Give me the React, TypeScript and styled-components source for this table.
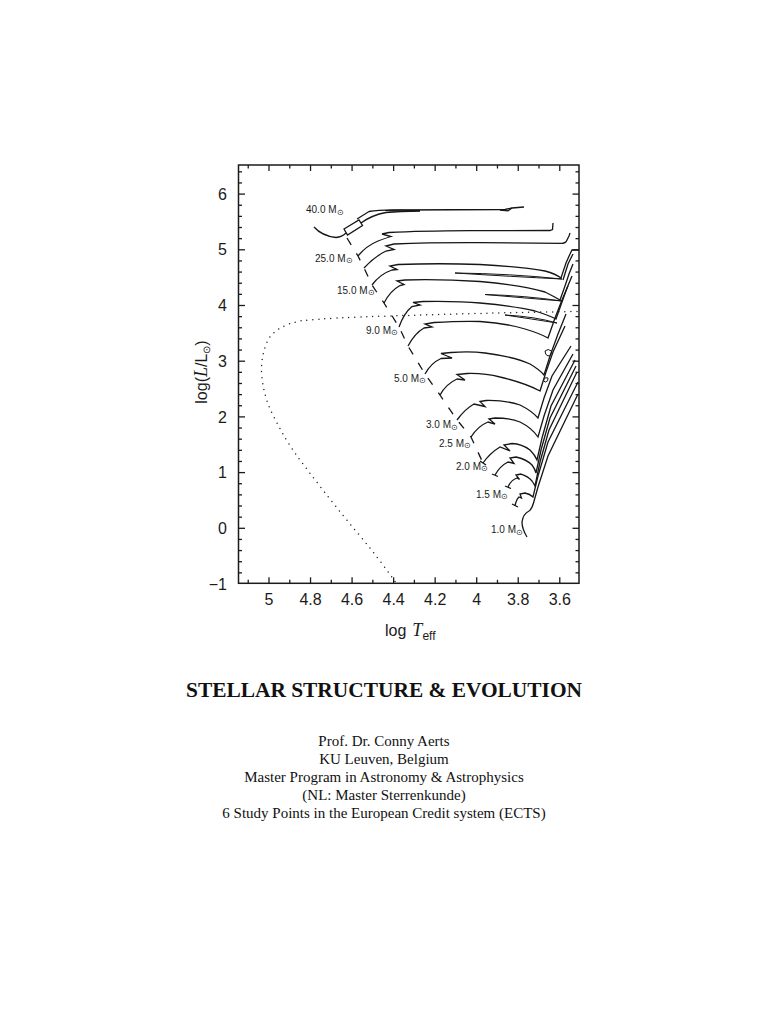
import React from 'react'
import styled, { createGlobalStyle } from 'styled-components'

const GlobalStyle = createGlobalStyle`
  html, body {
    margin: 0;
    padding: 0;
    background: #fff;
  }
  body {
    font-family: 'Liberation Serif', 'Times New Roman', serif;
    color: #111;
  }
`

const Page = styled.main`
  width: 768px;
  min-height: 1024px;
  box-sizing: border-box;
  padding-top: 150px;
  display: flex;
  flex-direction: column;
  align-items: center;
`

const Chart = styled.svg`
  display: block;
  width: 768px;
  height: 500px;
`

const Frame = styled.rect`
  fill: none;
  stroke: #1b1b1b;
  stroke-width: 1.5;
`

const Tick = styled.line`
  stroke: #1b1b1b;
  stroke-width: 1.3;
`

const TickLabel = styled.text`
  font-family: 'Liberation Sans', Arial, sans-serif;
  font-size: 16px;
  fill: #1b1b1b;
`

const AxisTitle = styled.text`
  font-family: 'Liberation Sans', Arial, sans-serif;
  font-size: 16px;
  fill: #1b1b1b;
`

const Italic = styled.tspan`
  font-family: 'Liberation Serif', 'Times New Roman', serif;
  font-style: italic;
  font-size: 18px;
`

const Sub = styled.tspan<{ $size: number }>`
  font-size: ${(p) => p.$size}px;
`

const MassLabel = styled.text`
  font-family: 'Liberation Sans', Arial, sans-serif;
  font-size: 10px;
  fill: #1b1b1b;
`

const Track = styled.path`
  fill: none;
  stroke: #161616;
  stroke-width: 1.3;
  stroke-linejoin: miter;
`

const Loop = styled.path`
  fill: none;
  stroke: #161616;
  stroke-width: 1;
`

const Zams = styled.path`
  fill: none;
  stroke: #161616;
  stroke-width: 1.3;
  stroke-dasharray: 8 10;
`

const Dotted = styled.path`
  fill: none;
  stroke: #222;
  stroke-width: 1.5;
  stroke-linecap: round;
  stroke-dasharray: 0 6;
`

const Title = styled.h1`
  margin: 27px 0 0;
  font-family: 'Liberation Serif', 'Times New Roman', serif;
  font-weight: 700;
  font-size: 21.4px;
  line-height: 26px;
  color: #111;
`

const Credits = styled.div`
  margin-top: 29px;
  display: flex;
  flex-direction: column;
  align-items: center;
  font-size: 15px;
  line-height: 18px;
`

const Line = styled.span`
  display: block;
  white-space: nowrap;
`

const LEFT = 238.5
const RIGHT = 579
const TOP = 165
const BOTTOM = 583.3

const xOf = (t: number) => 269 + (5 - t) * 207.7
const yOf = (l: number) => 528.3 - 55.7 * l

const xTicks = Array.from({ length: 16 }, (_, i) => 51 - i)
const yTicks = Array.from({ length: 37 }, (_, i) => i - 4)

const xLabels = [
  { t: 5, s: '5' },
  { t: 4.8, s: '4.8' },
  { t: 4.6, s: '4.6' },
  { t: 4.4, s: '4.4' },
  { t: 4.2, s: '4.2' },
  { t: 4, s: '4' },
  { t: 3.8, s: '3.8' },
  { t: 3.6, s: '3.6' },
]

const yLabels = [6, 5, 4, 3, 2, 1, 0, -1]

// evolutionary tracks, drawn in page pixels
const tracks = [
  // 40 Msun
  'M314,227 Q322,236 336,237.5 Q342,237 346,233',
  'M344,229 L359,220 L362.5,225.5 L347.5,235 Z',
  'M357,219 L369,211.5 Q380,209.5 400,210 L505,209.5 L512,208 L524,207',
  'M361,223 Q372,215 386,212.5 Q400,211.5 420,211',
  'M500,210 L508,210.8 L512,208',
  // 32
  'M358,256 Q366,246 378,241 Q386,238 391,236.5 L382,234 L389,232.5 Q420,231 470,230.7 L550,230.5 L552.5,229.5 L553,223',
  // 25
  'M364,268 Q374,257 386,251 L394,249.5 L386,246 L394,244 Q430,242.5 480,242.7 L562,243.3 Q566,243 567,240 L569,236 L570,233',
  // 20
  'M372,285 Q380,274 392,270 L397,269.5 L390,266 L398,264.5 Q440,263 480,264.5 Q520,266.5 545,271 Q556,274 561,278 L566,263 L570,254 L572,250 L579,250',
  'M563,280 L568,264 L573,254',
  // 15
  'M384,303 Q390,291 400,285.5 L404,284.5 L397,281 L405,280 Q440,279 480,281.5 Q520,285 545,292 Q553,296 560,300 L565,286 L569,274 L573,264',
  // 12
  'M399,327 Q404,313 412,306.5 L420,305 L413,302.5 L423,301.5 Q460,301 480,303 Q515,306 535,311 Q548,315 556,319 L562,302 L567,288 L572,276',
  // 9
  'M408,346 Q415,333 424,328 L432,327 L425,324 L434,322.5 Q460,321 480,321.5 Q505,323 525,329 Q540,333.5 548,338 L555,318 L562,300 L568,286',
  // 7
  'M425,374 Q431,363 441,358.5 L452,358 L441,353.5 L451,352.5 Q470,351 485,353 Q515,357 530,364 Q540,370 544,375 L550,356 L558,334 L566,314',
  // 5
  'M440,395 Q446,384 457,379 L465,380 L457,374.5 L467,373.5 Q485,373 500,377 Q525,383 540,391 L546,372 L553,352 L565,326',
  // 4
  'M457,420 Q465,409 474,404 L485,406.5 L480,401.5 L486,400.5 Q505,400 520,405 Q532,411 538,418 L544,398 L552,376 L571,346',
  // 3
  'M471,437 Q478,426 488,422 L495,424 L489,419 L495,418 Q510,418 520,422 Q532,428 538,437 L544,416 L553,390 L573,354',
  // 2.5
  'M483,463 Q490,453 500,447 L510,451 L504,445 L512,443.5 Q522,444 530,450 Q535,455 537,460 L542,438 L551,406 L575,360',
  'M480,461 L486,465',
  // 2
  'M495,475 Q500,466 508,462 L514,463.5 L510,458 L516,457 Q526,459 532,465 Q535,469 536,473 L541,450 L550,418 L576,366',
  'M492,474 L498,476.5',
  // 1.7
  'M508,487 Q511,480 517,478 L519.5,479.5 L516,475 L521,474 Q528,476 532,481 Q534,484 535,486 L540,462 L549,430 L577,372',
  'M505,486 L511,488.5',
  // 1.5
  'M515,506 Q516,500 519,497 L521.5,498 L520,494 L525,493 Q530,494 533,497 L538,476 L548,442 L578,382',
  'M512,504 L518,507',
  // 1.0
  'M527,537 Q522,529 522,522 Q523,514 529,511 Q532,509 533.5,503 L538,487 L548,456 L578,394',
]

// blue loops and small core-helium loops
const loops = [
  'M385,210.5 Q400,209.6 420,210.6 Q400,211.8 385,210.5 Z',
  'M455,273 Q510,273.6 562,279 Q512,276.6 455,273 Z',
  'M485,294.5 Q525,295.6 562,301 Q525,298 485,294.5 Z',
  'M505,315 Q535,316.6 557,323 Q532,319 505,315 Z',
  'M545,351 Q548,348 551.5,351 Q552,355 548,356 Q545,355 545,351 Z',
  'M543.5,380 Q545,376.5 548,378 Q548.5,381.5 545.5,382 Q543.5,381.5 543.5,380 Z',
]

const zamsPath =
  'M347,238 L358,256 L364,268 L372,285 L384,303 L399,327 L408,346 L425,374 L440,395 L457,420 L471,437 L483,463'

const dottedPath =
  'M577,311.5 Q480,313 390,316 Q330,317.5 300,321 Q276,326 268,340 Q261,355 261.5,372 Q263,395 272,413 Q285,440 300,460 Q330,500 355,530 Q378,557 396,583'

const massLabels = [
  { x: 306, y: 213, m: '40.0' },
  { x: 315, y: 261.5, m: '25.0' },
  { x: 337, y: 293.5, m: '15.0' },
  { x: 366, y: 333.5, m: '9.0' },
  { x: 394, y: 381.5, m: '5.0' },
  { x: 426, y: 428, m: '3.0' },
  { x: 439, y: 446.5, m: '2.5' },
  { x: 456, y: 469.5, m: '2.0' },
  { x: 476, y: 497.5, m: '1.5' },
  { x: 491, y: 533, m: '1.0' },
]

const HRDiagram = () => (
  <Chart viewBox="0 150 768 500">
    <Dotted d={dottedPath} />
    <Zams d={zamsPath} />
    {tracks.map((d, i) => (
      <Track key={i} d={d} />
    ))}
    {loops.map((d, i) => (
      <Loop key={i} d={d} />
    ))}
    <Frame x={LEFT} y={TOP} width={RIGHT - LEFT} height={BOTTOM - TOP} />

    {xTicks.map((k) => {
      const x = xOf(k / 10)
      const len = k % 2 === 0 ? 6 : 3.5
      return (
        <g key={k}>
          <Tick x1={x} x2={x} y1={BOTTOM} y2={BOTTOM - len} />
          <Tick x1={x} x2={x} y1={TOP} y2={TOP + len} />
        </g>
      )
    })}
    {yTicks.map((k) => {
      const y = yOf(k / 5)
      const len = k % 5 === 0 ? 6.5 : 3.5
      return (
        <g key={k}>
          <Tick x1={LEFT} x2={LEFT + len} y1={y} y2={y} />
          <Tick x1={RIGHT} x2={RIGHT - len} y1={y} y2={y} />
        </g>
      )
    })}

    {xLabels.map(({ t, s }) => (
      <TickLabel key={s} x={xOf(t)} y={604.5} textAnchor="middle">
        {s}
      </TickLabel>
    ))}
    {yLabels.map((l) => (
      <TickLabel key={l} x={227} y={yOf(l) + 5.6} textAnchor="end">
        {l < 0 ? `\u2212${-l}` : l}
      </TickLabel>
    ))}

    <AxisTitle transform="translate(207,372) rotate(-90)" textAnchor="middle">
      log(<Italic>L</Italic>/L<Sub $size={10} dy={3}>⊙</Sub><tspan dy={-3}>)</tspan>
    </AxisTitle>
    <AxisTitle x={385} y={636}>
      log<Italic dx={6}>T</Italic>
      <Sub $size={12} dy={4}>eff</Sub>
    </AxisTitle>

    {massLabels.map(({ x, y, m }) => (
      <MassLabel key={m} x={x} y={y}>
        {m} M<Sub $size={8} dy={1.5}>⊙</Sub>
      </MassLabel>
    ))}
  </Chart>
)

const App = () => (
  <>
    <GlobalStyle />
    <Page>
      <HRDiagram />
      <Title>STELLAR STRUCTURE &amp; EVOLUTION</Title>
      <Credits>
        <Line>Prof. Dr. Conny Aerts</Line>
        <Line>KU Leuven, Belgium</Line>
        <Line>Master Program in Astronomy &amp; Astrophysics</Line>
        <Line>(NL: Master Sterrenkunde)</Line>
        <Line>6 Study Points in the European Credit system (ECTS)</Line>
      </Credits>
    </Page>
  </>
)

export default App
